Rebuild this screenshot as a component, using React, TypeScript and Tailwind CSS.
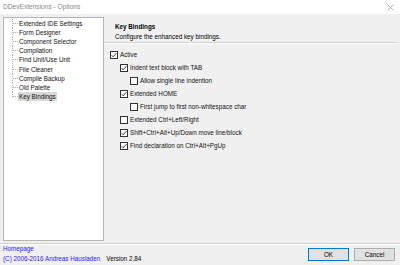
import React from 'react';

const treeItems = [
  'Extended IDE Settings',
  'Form Designer',
  'Component Selector',
  'Compilation',
  'Find Unit/Use Unit',
  'File Cleaner',
  'Compile Backup',
  'Old Palette',
  'Key Bindings',
];

const options = [
  { label: 'Active', level: 0, checked: true },
  { label: 'Indent text block with TAB', level: 1, checked: true },
  { label: 'Allow single line indention', level: 2, checked: false },
  { label: 'Extended HOME', level: 1, checked: true },
  { label: 'First jump to first non-whitespace char', level: 2, checked: false },
  { label: 'Extended Ctrl+Left/Right', level: 1, checked: false },
  { label: 'Shift+Ctrl+Alt+Up/Down move line/block', level: 1, checked: true },
  { label: 'Find declaration on Ctrl+Alt+PgUp', level: 1, checked: true },
];

const Branch: React.FC<{ last: boolean }> = ({ last }) => (
  <svg width="6" height="9" className="shrink-0">
    <line x1="0.5" y1="0" x2="0.5" y2={last ? 5 : 9} stroke="#b0b0b0" strokeDasharray="1 1" />
    <line x1="1" y1="4.5" x2="6" y2="4.5" stroke="#b0b0b0" strokeDasharray="1 1" />
  </svg>
);

const CheckBox: React.FC<{ checked: boolean }> = ({ checked }) => (
  <svg width="8" height="8" className="shrink-0">
    <rect x="0.5" y="0.5" width="7" height="7" fill="#fff" stroke="#333" />
    {checked && <path d="M1.6 4.2 L3.2 5.8 L6.4 2.2" fill="none" stroke="#222" strokeWidth="0.9" />}
  </svg>
);

export default function App() {
  return (
    <div
      className="w-[400px] h-[265px] bg-[#f0f0f0] flex flex-col overflow-hidden text-black"
      style={{ fontFamily: '"Liberation Sans", Arial, sans-serif' }}
    >
      {/* title bar */}
      <div className="h-[14px] bg-white flex items-center justify-between pl-[3px] pr-[6px] shrink-0">
        <span className="text-[6.6px] text-[#8a8a8a]">DDevExtensions - Options</span>
        <svg width="7" height="7">
          <path d="M0.5 0.5 L6.5 6.5 M6.5 0.5 L0.5 6.5" stroke="#9a9a9a" strokeWidth="0.8" />
        </svg>
      </div>

      {/* main */}
      <div className="flex pt-[3px] pl-[3px] h-[227px] shrink-0">
        <div className="w-[101px] h-[224px] bg-white border border-[#b4b4b4] pt-[1px] pl-[8px]">
          {treeItems.map((t, i) => (
            <div key={t} className="flex items-center h-[9.1px]">
              <Branch last={i === treeItems.length - 1} />
              <span
                className={`text-[6.3px] leading-[9px] px-[1px] whitespace-nowrap text-[#111] ${
                  i === treeItems.length - 1 ? 'bg-[#d9d9d9]' : ''
                }`}
              >
                {t}
              </span>
            </div>
          ))}
        </div>

        <div className="flex-1 flex flex-col">
          <div className="h-[26px] pl-[11px] pt-[5px] flex flex-col mr-[3px] border-b border-[#d0d0d0] shadow-[0_1px_0_#fff]">
            <span className="text-[6.3px] font-bold leading-[9px]">Key Bindings</span>
            <span className="text-[6.3px] leading-[9px] mt-[1px]">Configure the enhanced key bindings.</span>
          </div>
          <div className="flex flex-col pt-[5px] pl-[6px]">
            {options.map((o) => (
              <div
                key={o.label}
                className={`flex items-center gap-[2px] h-[13px] ${
                  o.level === 1 ? 'pl-[10px]' : o.level === 2 ? 'pl-[20px]' : ''
                }`}
              >
                <CheckBox checked={o.checked} />
                <span className="text-[6.3px] whitespace-nowrap text-[#111]">{o.label}</span>
              </div>
            ))}
          </div>
        </div>
      </div>

      {/* footer */}
      <div className="mt-[2px] border-t border-[#d0d0d0] shadow-[inset_0_1px_0_#fff] flex-1 flex items-end justify-between pl-[3px] pr-[5px] pb-[1px]">
        <div className="flex flex-col">
          <span className="text-[6.3px] leading-[10px] text-[#1a1aff]">Homepage</span>
          <div className="flex gap-[6px]">
            <span className="text-[6.3px] leading-[10px] text-[#1a1aff]">(C) 2006-2016 Andreas Hausladen</span>
            <span className="text-[6.3px] leading-[10px]">Version 2.84</span>
          </div>
        </div>
        <div className="flex gap-[5px] mb-[3px]">
          <div className="w-[41px] h-[13px] bg-[#e1e1e1] border border-[#0078d7] flex items-center justify-center text-[6.3px]">
            OK
          </div>
          <div className="w-[41px] h-[13px] bg-[#e1e1e1] border border-[#adadad] flex items-center justify-center text-[6.3px]">
            Cancel
          </div>
        </div>
      </div>
    </div>
  );
}
